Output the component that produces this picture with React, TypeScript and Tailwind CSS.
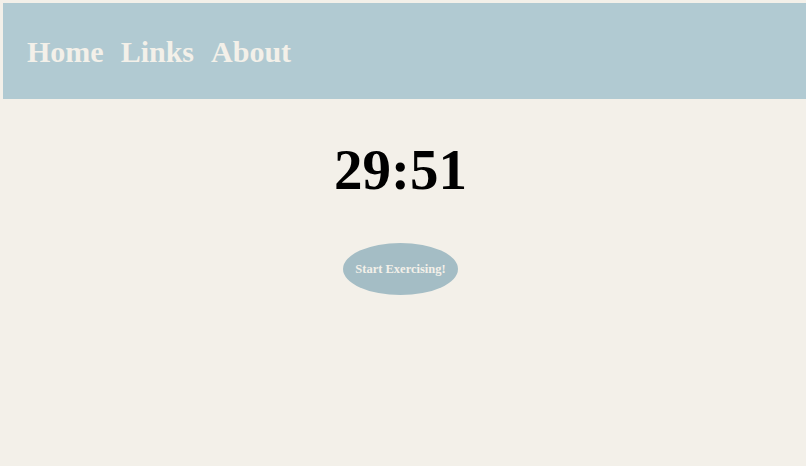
export default function App() {
  return (
    <div className="min-h-[466px] w-full bg-[#f3f0e9] pt-[3px] font-['Liberation_Serif',serif]">
      {/* ── Nav bar ─────────────────────────────── */}
      <header className="ml-[3px] flex h-[96px] items-center gap-[17px] bg-[#b1cad2] pl-[24px] pt-[2px]">
        {["Home", "Links", "About"].map((item) => (
          <a
            key={item}
            href="#"
            className="text-[30px] font-bold leading-none text-[#f3f0e9]"
          >
            {item}
          </a>
        ))}
      </header>

      {/* ── Timer ───────────────────────────────── */}
      <main className="flex flex-col items-center pr-[5px]">
        <h1 className="mt-[35px] text-[57px] font-bold leading-[72px] text-black">
          29:51
        </h1>
        <button
          type="button"
          className="mt-[37px] flex h-[52px] w-[115px] items-center justify-center rounded-[50%] bg-[#a4bdc5] text-[12.5px] font-bold text-[#f3f0e9]"
        >
          Start Exercising!
        </button>
      </main>
    </div>
  );
}
